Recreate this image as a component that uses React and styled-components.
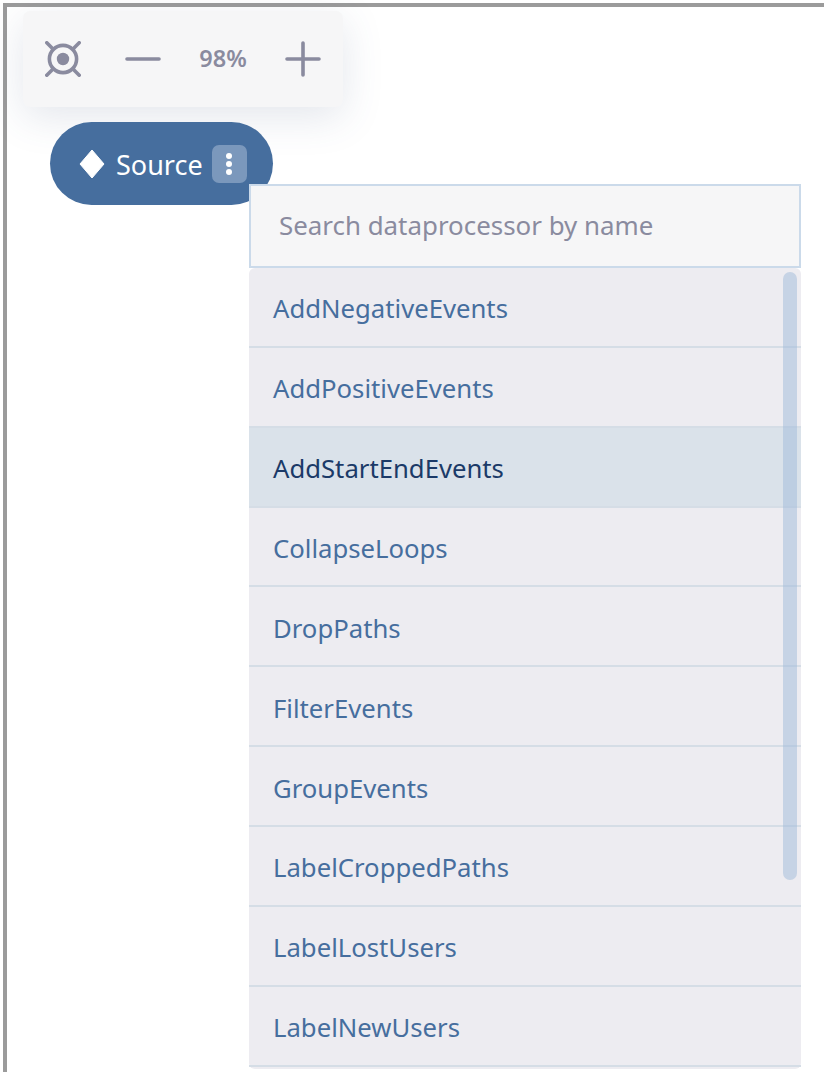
import React from 'react';
import styled, {createGlobalStyle} from 'styled-components';

const GlobalStyle = createGlobalStyle`
  html, body {
    margin: 0;
    padding: 0;
    background: #fff;
    overflow: hidden;
  }
  body {
    font-family: "Noto Sans", "Open Sans", sans-serif;
  }
`;

const Frame = styled.div`
  box-sizing: border-box;
  height: 1069px;
  margin: 3px 0 0 3px;
  padding: 4px 0 0 16px;
  border-top: 4px solid #9b9b9b;
  border-left: 4px solid #9b9b9b;
`;
const Toolbar = styled.div`
  display: flex;
  align-items: center;
  box-sizing: border-box;
  width: 320px;
  height: 96px;
  padding: 0 22px 0 22px;
  border-radius: 7px;
  background: #f6f6f7;
  box-shadow: 0 10px 40px rgba(70, 90, 130, 0.15);
`;
const ToolButton = styled.button`
  display: flex;
  align-items: center;
  justify-content: center;
  flex: none;
  width: 36px;
  height: 36px;
  margin-left: ${p => p.$gap || 0}px;
  padding: 0;
  border: 0;
  background: none;
`;
const ZoomValue = styled.span`
  flex: none;
  width: 48px;
  margin-left: 38px;
  padding-bottom: 2px;
  color: #8a8b9f;
  font-size: 23.5px;
  font-weight: 600;
  text-align: center;
`;
const Node = styled.div`
  position: relative;
  display: flex;
  align-items: center;
  box-sizing: border-box;
  width: 223px;
  height: 83px;
  margin: 15px 0 0 27px;
  padding-left: 29px;
  border-radius: 42px;
  background: #466e9e;
  color: #fff;
`;
const NodeLabel = styled.span`
  margin-left: 11px;
  padding-top: 1px;
  font-size: 27px;
`;
const NodeMenu = styled.div`
  display: flex;
  align-items: center;
  justify-content: center;
  width: 35px;
  height: 38px;
  margin-left: 9px;
  border-radius: 7px;
  background: #7b98bc;
`;
const Dropdown = styled.div`
  position: absolute;
  top: 62px;
  left: 199px;
  width: 552px;
`;
const SearchBox = styled.div`
  display: flex;
  align-items: center;
  box-sizing: border-box;
  height: 84px;
  padding: 0 0 2px 28px;
  border: 2px solid #cbdaea;
  background: #f6f6f7;
  color: #8a8b9f;
  font-size: 25.9px;
`;
const List = styled.ul`
  position: relative;
  margin: 0;
  padding: 0 0 2px;
  list-style: none;
  border-radius: 6px;
  background: #edecf1;
`;
const Item = styled.li`
  display: flex;
  align-items: center;
  box-sizing: border-box;
  height: 79.87px;
  padding: 4px 0 0 24px;
  border-bottom: 2px solid #d5dde6;
  background: ${p => (p.$active ? '#dae2ea' : 'transparent')};
  color: ${p => (p.$active ? '#1b3a68' : '#466e9e')};
  font-size: 25.7px;
`;
const ScrollThumb = styled.div`
  position: absolute;
  top: 4px;
  right: 4px;
  width: 14px;
  height: 608px;
  border-radius: 7px;
  background: rgba(160, 186, 218, 0.5);
`;

const processors = [
  'AddNegativeEvents',
  'AddPositiveEvents',
  'AddStartEndEvents',
  'CollapseLoops',
  'DropPaths',
  'FilterEvents',
  'GroupEvents',
  'LabelCroppedPaths',
  'LabelLostUsers',
  'LabelNewUsers',
];

const CenterIcon = () => (
  <svg width="36" height="36" viewBox="0 0 36 36" fill="none" stroke="#8a8b9f" strokeWidth="3.6" strokeLinecap="round">
    <circle cx="18" cy="18" r="13.6"/>
    <circle cx="18" cy="18" r="6.2" fill="#8a8b9f" stroke="none"/>
    <path d="M1.8 1.8 L8 8 M34.2 1.8 L28 8 M1.8 34.2 L8 28 M34.2 34.2 L28 28"/>
  </svg>
);

const MinusIcon = () => (
  <svg width="36" height="36" viewBox="0 0 36 36" fill="none" stroke="#8a8b9f" strokeWidth="3.6" strokeLinecap="round">
    <path d="M2 18 H34"/>
  </svg>
);

const PlusIcon = () => (
  <svg width="36" height="36" viewBox="0 0 36 36" fill="none" stroke="#8a8b9f" strokeWidth="3.6" strokeLinecap="round">
    <path d="M2 18 H34 M18 2 V34"/>
  </svg>
);

const DiamondIcon = () => (
  <svg width="26" height="30" viewBox="0 0 26 30" fill="#fff">
    <path d="M13 1 L25 15 L13 29 L1 15 Z" stroke="#fff" strokeLinejoin="round" strokeWidth="1"/>
  </svg>
);

const DotsIcon = () => (
  <svg width="8" height="24" viewBox="0 0 8 24" fill="#fff">
    <circle cx="4" cy="4" r="3"/>
    <circle cx="4" cy="12" r="3"/>
    <circle cx="4" cy="20" r="3"/>
  </svg>
);

function App() {
  return (
    <>
      <GlobalStyle/>
      <Frame>
        <Toolbar>
          <ToolButton><CenterIcon/></ToolButton>
          <ToolButton $gap={44}><MinusIcon/></ToolButton>
          <ZoomValue>98%</ZoomValue>
          <ToolButton $gap={38}><PlusIcon/></ToolButton>
        </Toolbar>
        <Node>
          <DiamondIcon/>
          <NodeLabel>Source</NodeLabel>
          <NodeMenu><DotsIcon/></NodeMenu>
          <Dropdown>
            <SearchBox>Search dataprocessor by name</SearchBox>
            <List>
              {processors.map((name, i) => <Item key={name} $active={i === 2}>{name}</Item>)}
              <ScrollThumb/>
            </List>
          </Dropdown>
        </Node>
      </Frame>
    </>
  );
}

export default App;
